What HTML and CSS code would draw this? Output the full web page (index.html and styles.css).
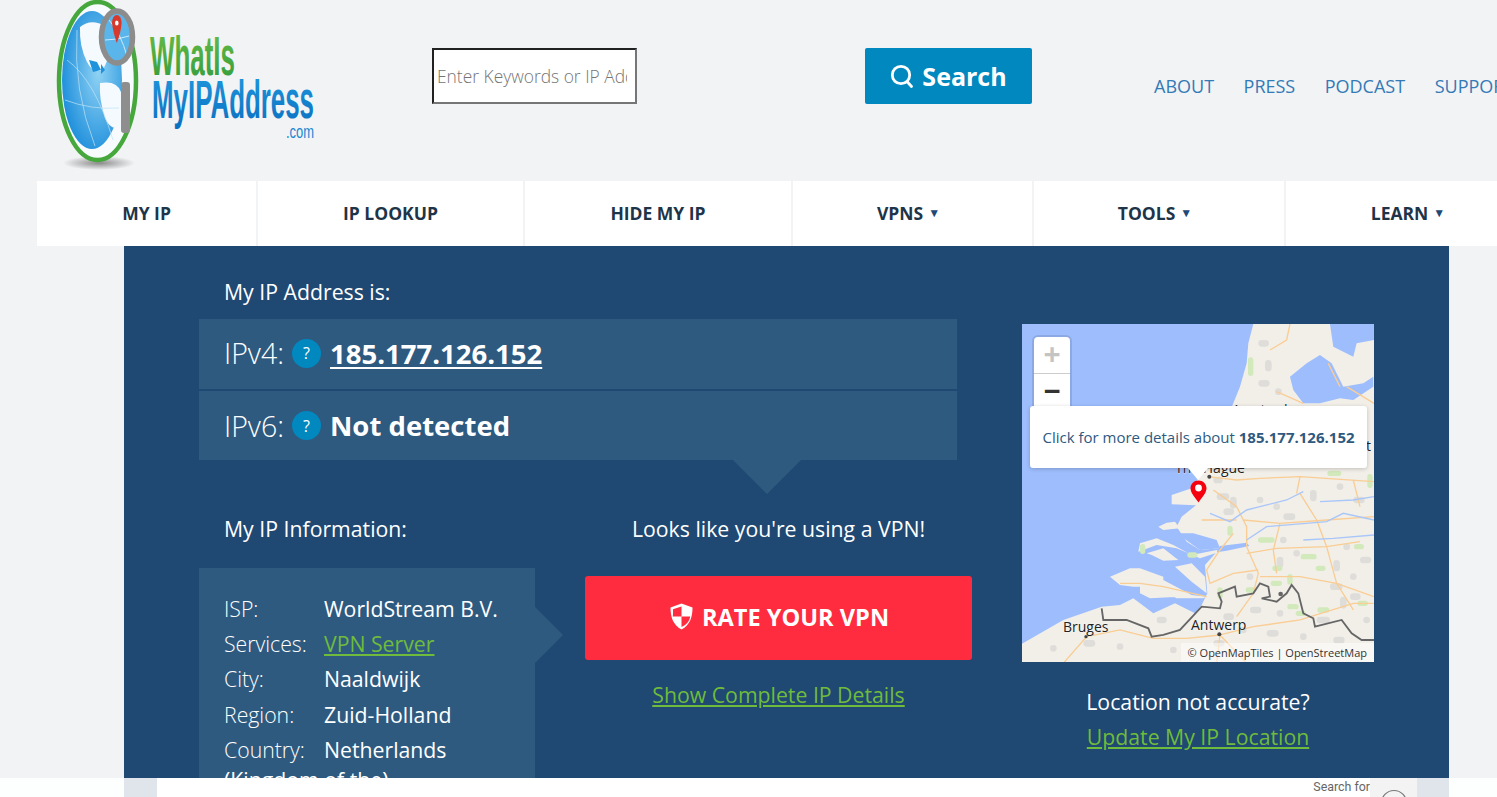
FILE: index.html
```html
<!DOCTYPE html>
<html lang="en">
<head>
  <meta charset="UTF-8" />
  <title>What Is My IP Address</title>
  <link rel="stylesheet" href="styles.css">
</head>
<body>
  <header class="top">
    <a class="logo" href="#">
      <svg width="262" height="176" viewBox="0 0 262 176">
        <defs>
          <linearGradient id="gGreen" x1="0" y1="0" x2="0" y2="1"><stop offset="0" stop-color="#6fbe44"/><stop offset="1" stop-color="#2e9a3f"/></linearGradient>
          <linearGradient id="gBlue" x1="0" y1="0" x2="0" y2="1"><stop offset="0" stop-color="#1f9ade"/><stop offset="1" stop-color="#0a6fc0"/></linearGradient>
          <radialGradient id="gShadow"><stop offset="0" stop-color="#8a8a8a"/><stop offset="1" stop-color="#f2f3f5"/></radialGradient>
          <radialGradient id="gGlobe" cx="0.6" cy="0.45" r="0.7"><stop offset="0" stop-color="#8fd2f4"/><stop offset="1" stop-color="#0f86d8"/></radialGradient>
        </defs>
        <ellipse cx="44" cy="163" rx="36" ry="7" fill="url(#gShadow)"/>
        <ellipse cx="42.5" cy="81" rx="38.5" ry="79" fill="#f7fbfe" stroke="#46a83c" stroke-width="4.5"/>
        <ellipse cx="37" cy="80" rx="30" ry="69" fill="url(#gGlobe)"/>
        <path d="M25 27Q36 18 50 26L56 52L48 70Q38 74 32 62Q24 46 25 27Z" fill="#f4fafe"/>
        <path d="M45 83Q62 80 66 92L66 126Q56 132 50 118Q44 100 45 83Z" fill="#f4fafe"/>
        <path d="M34 60l8 2l4 8l-8 2ZM46 64l4 6l-4 4Z" fill="#1f92dc"/>
        <path d="M12 60Q40 80 58 140M22 30Q18 90 40 146M10 100Q36 110 64 108" fill="none" stroke="#bfe3f6" stroke-width="0.7"/>
        <ellipse cx="62" cy="37" rx="14" ry="25" fill="#5ab6ea"/>
        <path d="M54 20Q66 34 72 56M50 40Q62 40 74 36" fill="none" stroke="#e8f5fc" stroke-width="0.8"/>
        <ellipse cx="62" cy="37" rx="15.5" ry="26" fill="none" stroke="#8c8c8c" stroke-width="5.5"/>
        <rect x="66" y="82" width="9" height="51" rx="3" fill="#8e8e8e"/>
        <path d="M57 23a4.8 8 0 0 1 9.6 0Q66 32 61.8 43Q58 32 57 23Z" fill="#d8392b"/>
        <ellipse cx="61.8" cy="23" rx="1.8" ry="2.6" fill="#fff"/>
        <text class="logo-word" x="95" y="75" font-size="56" fill="url(#gGreen)" textLength="85" lengthAdjust="spacingAndGlyphs">WhatIs</text>
        <text class="logo-word" x="97" y="118" font-size="54" fill="url(#gBlue)" textLength="162" lengthAdjust="spacingAndGlyphs">MyIPAddress</text>
        <text class="logo-com" x="231" y="138" font-size="18" fill="#1c86d0" textLength="28" lengthAdjust="spacingAndGlyphs">.com</text>
      </svg>
    </a>
    <input class="search-input" type="text" placeholder="Enter Keywords or IP Address...">
    <button class="search-btn">
      <svg width="24" height="25" viewBox="0 0 24 25" fill="none" stroke="#fff" stroke-width="2.8" stroke-linecap="round"><circle cx="11" cy="11" r="8.7"/><path d="M17 17.5l4.5 5"/></svg>
      Search
    </button>
    <nav class="top-links">
      <a href="#">ABOUT</a>
      <a href="#">PRESS</a>
      <a href="#">PODCAST</a>
      <a href="#">SUPPORT</a>
    </nav>
  </header>

  <nav class="menu">
    <a class="w219" href="#">MY IP</a>
    <a class="w265" href="#">IP LOOKUP</a>
    <a class="w266" href="#">HIDE MY IP</a>
    <a class="w239" href="#">VPNS <span class="caret">▼</span></a>
    <a class="w250" href="#">TOOLS <span class="caret">▼</span></a>
    <a class="w244" href="#">LEARN <span class="caret">▼</span></a>
  </nav>

  <main class="panel">
    <section class="left">
      <div class="label first">My IP Address is:</div>
      <div class="ip-rows">
        <div class="ip-row">IPv4: <span class="help">?</span> <a class="ip-val" href="#">185.177.126.152</a></div>
        <div class="ip-row">IPv6: <span class="help">?</span> <b class="ip-val plain">Not detected</b></div>
      </div>
      <div class="lower">
        <div class="info-col">
          <div class="label">My IP Information:</div>
          <div class="info-box">
            <div class="info-line"><span class="key">ISP:</span>WorldStream B.V.</div>
            <div class="info-line"><span class="key">Services:</span><a class="green" href="#">VPN Server</a></div>
            <div class="info-line"><span class="key">City:</span>Naaldwijk</div>
            <div class="info-line"><span class="key">Region:</span>Zuid-Holland</div>
            <div class="info-line"><span class="key">Country:</span>Netherlands (Kingdom of the)</div>
          </div>
        </div>
        <div class="vpn-col">
          <div class="label center">Looks like you're using a VPN!</div>
          <a class="rate-btn" href="#">
            <svg width="23" height="27" viewBox="0 0 23 27"><path d="M11.5 0.5L22.5 4.5C22.5 14 20 22 11.5 26.5C3 22 0.5 14 0.5 4.5Z" fill="#fff"/><path d="M11.5 3.5V13.5H2.8C3.2 11 3 8 3 6.3ZM11.5 13.5H20.2C19.4 18 17 21.5 11.5 24Z" fill="#ff2b3e"/></svg>
            RATE YOUR VPN
          </a>
          <a class="green details" href="#">Show Complete IP Details</a>
        </div>
      </div>
    </section>

    <section class="map-col">
      <div class="map">
        <svg class="map-art" width="352" height="338" viewBox="0 0 352 338">
          <rect width="352" height="338" fill="#9dbdfd"/>
          <g transform="translate(-2 -4) scale(0.3333)">
            <path fill="#f2efe9" d="M700 12L685 70L680 130L660 200L640 250L600 340L560 440L515 505L455 525L455 553L528 556L485 590L470 620L500 665L540 690L600 685L555 735L562 820L545 855L525 880L465 850L400 880L340 835L300 855L245 860L130 900L0 975V1030H1065V12Z"/>
            <path fill="#9dbdfd" d="M470 640L540 690L600 685L590 660L520 640Z"/>
            <path fill="#f2efe9" d="M415 620L440 608L465 605L480 625L430 630Z M355 695L360 670L410 655L460 675L515 705L590 690L600 695L540 715L470 685L410 675Z M380 700L430 685L475 720L430 722L395 705Z M465 740L515 730L555 770L560 820L515 785Z M270 770L330 745L360 745L430 770L430 780L515 825L560 830L550 835L470 835L400 800L340 800L300 795Z M360 790L430 790L480 830L390 835L360 820Z"/>
            <path fill="none" stroke="#dfddd9" stroke-width="20" stroke-linecap="round" d="M725 70h12M745 130v14M725 190h14M775 215h.1M600 530h18M640 540v16M620 575h12M590 480h8M770 560h.1M800 590h16M950 730v14M980 680h.1M940 800h18M970 840v16M700 870h14M780 880h.1M900 900h20M1000 830h12M670 930h.1M590 970h14M100 985h.1M200 970h16M420 900h10M880 520v14M960 500h.1M1010 540h14M720 540h.1M780 720v14M830 700h.1M690 770h.1M1030 720h14M790 660h.1M1000 770h.1M620 890h12M750 940h16M850 950h.1M950 960h14M460 990h.1M300 980h.1M1040 900h.1"/>
            <path fill="none" stroke="#d2e9bc" stroke-width="16" stroke-linecap="round" d="M692 120v40M630 625v14M722 660h34M850 710h32M765 745h14M510 705h14M368 680v14M600 810v18M685 810h14M810 770v16M930 460h26M1050 470v26M1010 680h14M900 870h20M835 880h14M1020 850h16M895 745h14M935 185h10M760 790h18M810 860h18"/>
            <path fill="#9dbdfd" d="M810 170L860 130L900 105L935 130L970 200L1030 190L1060 170V200L1000 240L960 235L900 250L850 250L820 210Z M930 12H1062V60L1010 70L1000 110L940 80Z M600 678L680 668L688 678L620 692L590 697Z"/>
            <g fill="none" stroke="#f9cd93" stroke-width="4">
              <path d="M562 470L650 480L720 475L840 470L1062 485"/>
              <path d="M650 560L680 620L680 680L715 760L700 820L650 890"/>
              <path d="M840 520L890 600L920 680L950 790L1000 870"/>
              <path d="M780 610L760 690L770 760"/>
              <path d="M670 600L780 610L920 600L1062 590"/>
              <path d="M600 690L560 750L570 790L640 760L715 750"/>
              <path d="M680 700L770 685L920 680L1020 665"/>
              <path d="M720 770L840 770L950 790L1062 830"/>
              <path d="M640 640L600 690M580 510L650 560"/>
              <path d="M600 945L700 920L840 900L1000 850L1062 850"/>
              <path d="M600 945L500 955L400 955L300 930L200 950L130 1030"/>
              <path d="M300 790L360 790L430 800L560 830"/>
              <path d="M600 945L590 1030M600 945L680 1030"/>
              <path d="M750 90L800 60L810 12M770 215L850 250M925 130L960 200M980 200L1062 250"/>
              <path d="M840 470L830 520M1000 480L1020 560M545 600L650 600"/>
            </g>
            <g fill="none" stroke="#a9c6f8" stroke-width="4">
              <path d="M570 580L630 605L680 570L800 540L850 515"/>
              <path d="M900 545L1000 540L1062 530"/>
              <path d="M680 660L740 620L920 605L970 580L1062 600"/>
              <path d="M850 660L940 655L1062 645"/>
            </g>
            <path fill="none" stroke="#666" stroke-width="5.5" d="M245 865L250 900L300 900L320 900L385 925L395 950L430 945L480 930L545 860L600 865L605 845L595 820L645 800L650 830L700 820L720 790L745 800L750 830L725 835L770 845L800 820L815 795L835 820L850 880L880 895L885 920L965 900L995 940L1025 960L1062 960"/>
            <circle cx="782" cy="822" r="7" fill="#666"/>
            <circle cx="568" cy="470" r="6" fill="#444"/>
            <circle cx="598" cy="943" r="6" fill="#444"/>
            <circle cx="198" cy="950" r="5" fill="#444"/>
          </g>
          <text class="map-town" x="210" y="91">Amsterdam</text>
          <text class="map-town" x="153" y="149">The Hague</text>
          <text class="map-town" x="300" y="127">Utrecht</text>
          <text class="map-town" x="41" y="308">Bruges</text>
          <text class="map-town" x="169" y="306">Antwerp</text>
        </svg>
        <div class="zoom-ctl">
          <span class="zoom-btn off">+</span>
          <span class="zoom-btn">−</span>
        </div>
        <div class="popup">Click for more details about <b>185.177.126.152</b></div>
        <svg class="pin" width="17" height="23" viewBox="0 0 17 23"><path d="M8.5 0.5C4 0.5 0.5 4 0.5 8.2C0.5 13 5.5 18 8.5 22.5C11.5 18 16.5 13 16.5 8.2C16.5 4 13 0.5 8.5 0.5Z" fill="#f4000f"/><circle cx="8.5" cy="8" r="3.4" fill="#fff"/></svg>
        <div class="attrib">© OpenMapTiles | OpenStreetMap</div>
      </div>
      <div class="label center loc">Location not accurate?</div>
      <a class="green update" href="#">Update My IP Location</a>
    </section>
  </main>

  <div class="ad-bar">
    <div class="ad">
      <span class="ad-text">Search for</span>
      <div class="ad-box">
        <svg width="28" height="28" viewBox="0 0 28 28" fill="none" stroke="#777" stroke-width="1.2"><circle cx="14" cy="14" r="12.5"/><circle cx="10" cy="10" r="1" fill="#777"/><circle cx="18" cy="10" r="1" fill="#777"/></svg>
      </div>
    </div>
  </div>
</body>
</html>
```

FILE: styles.css
```css
html, body {
  margin: 0;
  height: 100%;
  overflow: hidden;
}
body {
  font-family: 'Open Sans', sans-serif;
  background: #f2f3f5;
  color: #fff;
}
a {
  text-decoration: none;
}

/* header */
.top {
  display: flex;
  align-items: flex-start;
  height: 181px;
  padding-left: 55px;
  white-space: nowrap;
}
.logo {
  display: block;
  flex: none;
  width: 262px;
  height: 176px;
}
.logo-word, .logo-com {
  font-family: 'Liberation Sans', sans-serif;
}
.logo-word {
  font-weight: 700;
}
.search-input {
  flex: none;
  box-sizing: border-box;
  width: 205px;
  height: 56px;
  margin: 48px 0 0 115px;
  padding: 0 8px 1px 3px;
  border: 2px inset #767676;
  background: #fff;
  font-family: 'Open Sans', sans-serif;
  font-size: 17.4px;
  font-weight: 300;
}
.search-btn {
  display: flex;
  flex: none;
  align-items: center;
  justify-content: center;
  gap: 8px;
  width: 167px;
  height: 56px;
  margin: 48px 0 0 228px;
  border: none;
  border-radius: 2px;
  background: #0088bf;
  color: #fff;
  font-family: 'Open Sans', sans-serif;
  font-size: 25px;
  font-weight: 700;
}
.top-links {
  display: flex;
  gap: 29.5px;
  margin: 73px 0 0 122px;
}
.top-links a {
  color: #337ab7;
  font-size: 18px;
  line-height: 26px;
}

/* main menu */
.menu {
  display: flex;
  gap: 2px;
  margin-left: 37px;
  height: 65px;
  white-space: nowrap;
}
.menu a {
  display: flex;
  align-items: center;
  justify-content: center;
  flex: none;
  box-sizing: border-box;
  gap: 5px;
  height: 65px;
  padding-bottom: 2px;
  background: #fff;
  color: #1e3448;
  font-size: 17.5px;
  font-weight: 700;
}
.w219 { width: 219px; }
.w265 { width: 265px; }
.w266 { width: 266px; }
.w239 { width: 239px; padding-right: 8px; }
.w250 { width: 250px; padding-right: 8px; }
.w244 { width: 244px; }
.caret {
  font-size: 12px;
  color: #204a75;
}

/* blue panel */
.panel {
  display: flex;
  align-items: flex-start;
  box-sizing: border-box;
  width: 1325px;
  height: 560px;
  margin-left: 124px;
  padding-left: 75px;
  background: #1f4872;
  font-size: 21.25px;
}
.left {
  flex: none;
  width: 773px;
}
.label {
  line-height: 27px;
  font-size: 21.25px;
}
.label.first {
  margin: 32px 0 14px 25px;
}
.label.center {
  text-align: center;
}
.ip-rows {
  position: relative;
  width: 758px;
}
.ip-rows::after {
  content: "";
  position: absolute;
  left: 534px;
  bottom: -34px;
  border-style: solid;
  border-width: 34px 34.5px 0;
  border-color: #2e5a80 transparent transparent;
}
.ip-row {
  display: flex;
  align-items: center;
  box-sizing: border-box;
  gap: 8px;
  height: 70px;
  padding: 0 0 2px 25px;
  background: #2e5a80;
  font-size: 28.5px;
  font-weight: 300;
}
.ip-row + .ip-row {
  height: 69px;
  margin-top: 2px;
  padding-bottom: 0;
}
.help {
  display: flex;
  align-items: center;
  justify-content: center;
  width: 29px;
  height: 29px;
  border-radius: 50%;
  background: #0088bf;
  font-size: 16px;
  font-weight: 400;
}
.ip-val {
  margin-left: 1px;
  color: #fff;
  font-size: 27.5px;
  font-weight: 700;
  text-decoration: underline;
  text-decoration-thickness: 2px;
  text-underline-offset: 3px;
}
.ip-val.plain {
  text-decoration: none;
}
.lower {
  display: flex;
  margin-top: 55px;
}
.info-col {
  width: 336px;
  flex: none;
}
.info-col .label {
  padding-left: 25px;
}
.info-box {
  position: relative;
  box-sizing: border-box;
  height: 260px;
  margin-top: 26px;
  padding: 25.5px 20px 0 25px;
  background: #2e5a80;
}
.info-box::after {
  content: "";
  position: absolute;
  right: -28px;
  top: 39px;
  border-style: solid;
  border-width: 28px 0 28px 28px;
  border-color: transparent transparent transparent #2e5a80;
}
.info-line {
  margin-bottom: 5.4px;
  line-height: 30px;
}
.key {
  display: inline-block;
  width: 100px;
  font-weight: 300;
}
.green {
  color: #6fbb3c;
  text-decoration: underline;
}
.vpn-col {
  width: 387px;
  margin-left: 50px;
  text-align: center;
}
.rate-btn {
  display: flex;
  align-items: center;
  justify-content: center;
  box-sizing: border-box;
  gap: 9px;
  height: 84px;
  margin-top: 34px;
  padding: 0 0 3px 2px;
  border-radius: 3px;
  background: #ff2b3e;
  color: #fff;
  font-size: 23.6px;
  font-weight: 700;
}
.details {
  display: block;
  margin-top: 21px;
  line-height: 27px;
}

/* map */
.map-col {
  flex: none;
  width: 352px;
  margin: 78px 0 0 50px;
  text-align: center;
}
.map {
  position: relative;
  width: 352px;
  height: 338px;
  overflow: hidden;
}
.map-art {
  display: block;
}
.map-town {
  font-family: 'Open Sans', sans-serif;
  font-size: 14px;
  fill: #222;
  stroke: #fff;
  stroke-width: 0.4px;
  paint-order: stroke;
}
.zoom-ctl {
  position: absolute;
  left: 12px;
  top: 13px;
  z-index: 1;
  width: 36px;
  border-radius: 4px;
  background: #fff;
  box-shadow: 0 0 0 2px rgba(0, 0, 0, 0.1);
}
.zoom-btn {
  display: block;
  height: 36px;
  color: #333;
  font-size: 30px;
  font-weight: 700;
  line-height: 34px;
  text-align: center;
}
.zoom-btn.off {
  border-bottom: 1px solid #ccc;
  color: #c4c4c4;
}
.popup {
  position: absolute;
  left: 8px;
  top: 82px;
  z-index: 2;
  width: 337px;
  height: 62px;
  border-radius: 3px;
  background: #fff;
  box-shadow: 0 1px 4px rgba(0, 0, 0, 0.2);
  color: #2e5a80;
  font-size: 15px;
  line-height: 63px;
  text-align: center;
  white-space: nowrap;
}
.popup::after {
  content: "";
  position: absolute;
  left: 158px;
  bottom: -12px;
  border-style: solid;
  border-width: 12px 10px 0;
  border-color: #fff transparent transparent;
}
.pin {
  position: absolute;
  left: 168px;
  top: 156px;
}
.attrib {
  position: absolute;
  right: 0;
  bottom: 0;
  padding: 0 7px;
  background: rgba(255, 255, 255, 0.5);
  color: #333;
  font-size: 11px;
  line-height: 19px;
  white-space: nowrap;
}
.loc {
  margin-top: 26px;
  line-height: 27px;
}
.update {
  display: block;
  margin-top: 8px;
  line-height: 27px;
}

/* bottom ad */
.ad-bar {
  position: fixed;
  left: 0;
  right: 0;
  bottom: 0;
  height: 19px;
  background: rgba(255, 255, 255, 0.86);
  overflow: hidden;
}
.ad {
  display: flex;
  justify-content: flex-end;
  width: 1260px;
  margin-left: 157px;
  background: #fff;
}
.ad-text {
  color: #666;
  font-family: Roboto, sans-serif;
  font-size: 12.4px;
  line-height: 18px;
}
.ad-box {
  display: flex;
  justify-content: center;
  box-sizing: border-box;
  width: 47px;
  height: 40px;
  padding-top: 11px;
  background: #f3f3f3;
}
```
